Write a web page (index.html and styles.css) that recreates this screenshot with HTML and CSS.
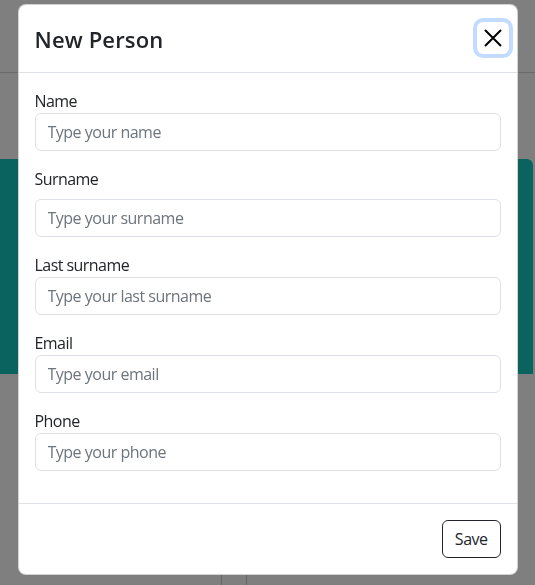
FILE: index.html
```html
<!DOCTYPE html>
<html lang="en">
<head>
<meta charset="utf-8">
<title>New Person</title>
<link rel="stylesheet" href="styles.css">
</head>
<body>
<div class="page">
  <div class="topbar"></div>
  <div class="hero"></div>
  <div class="columns">
    <div class="col col-a"></div>
    <div class="col col-b"></div>
    <div class="col col-c"></div>
  </div>
</div>
<div class="backdrop"></div>
<div class="modal">
  <div class="dialog">
    <div class="modal-header">
      <h4 class="modal-title">New Person</h4>
      <button class="btn-close" type="button" aria-label="Close">
        <svg width="18" height="18" viewBox="0 0 18 18"><path d="M1 1L17 17M17 1L1 17" stroke="#000" stroke-width="2" fill="none"/></svg>
      </button>
    </div>
    <form class="modal-body">
      <div class="field">
        <label class="label" for="name">Name</label>
        <input class="input" id="name" type="text" placeholder="Type your name">
      </div>
      <div class="field">
        <label class="label label-spaced" for="surname">Surname</label>
        <input class="input" id="surname" type="text" placeholder="Type your surname">
      </div>
      <div class="field">
        <label class="label" for="last">Last surname</label>
        <input class="input" id="last" type="text" placeholder="Type your last surname">
      </div>
      <div class="field">
        <label class="label" for="email">Email</label>
        <input class="input" id="email" type="email" placeholder="Type your email">
      </div>
      <div class="field">
        <label class="label" for="phone">Phone</label>
        <input class="input" id="phone" type="tel" placeholder="Type your phone">
      </div>
    </form>
    <div class="modal-footer">
      <button class="btn-save" type="button">Save</button>
    </div>
  </div>
</div>
</body>
</html>
```
FILE: styles.css
```css
* { box-sizing: border-box; }
html, body { margin: 0; padding: 0; }
body {
  width: 535px;
  height: 585px;
  overflow: hidden;
  background: #ffffff;
  font-family: "Open Sans", "Noto Sans", sans-serif;
  color: #212529;
}
.page {
  display: flex;
  flex-direction: column;
  height: 585px;
}
.topbar {
  height: 73px;
  border-bottom: 1px solid #d6d6d6;
  flex: none;
}
.hero {
  margin-top: 86px;
  height: 215px;
  width: 533px;
  background: #16c6c1;
  border-radius: 0 6px 0 0;
  flex: none;
}
.columns {
  margin-top: 200px;
  flex: 1;
  display: flex;
}
.col-a { width: 222px; border-right: 1px solid #cccccc; }
.col-b { width: 25px; border-right: 1px solid #cccccc; }
.col-c { flex: 1; }
.backdrop {
  position: fixed;
  inset: 0;
  background: rgba(0, 0, 0, 0.5);
}
.modal {
  position: fixed;
  inset: 0;
  display: flex;
  justify-content: center;
  align-items: flex-start;
}
.dialog {
  width: 500px;
  margin-top: 3.5px;
  background: #fff;
  border: 1px solid rgba(0, 0, 0, 0.175);
  border-radius: 8px;
  display: flex;
  flex-direction: column;
}
.modal-header {
  display: flex;
  align-items: center;
  padding: 16px;
  border-bottom: 1px solid #dee2e6;
}
.modal-title {
  margin: 0;
  padding-top: 2px;
  font-size: 22px;
  font-weight: 600;
  line-height: 33px;
  letter-spacing: 0.15px;
  color: #212529;
}
.btn-close {
  width: 32px;
  height: 32px;
  margin: -8px -8px -8px auto;
  padding: 0;
  border: 0;
  border-radius: 6px;
  background: transparent;
  display: flex;
  align-items: center;
  justify-content: center;
  box-shadow: 0 0 0 4px rgba(13, 110, 253, 0.25);
}
.modal-body {
  padding: 16px;
  display: flex;
  flex-direction: column;
  margin: 0;
}
.field {
  display: flex;
  flex-direction: column;
  margin-bottom: 16px;
}
.label {
  font-size: 16px;
  line-height: 24px;
  letter-spacing: -0.55px;
}
.label-spaced { margin-bottom: 8px; }
.input {
  height: 38px;
  padding: 6px 12px;
  font-family: inherit;
  font-size: 16px;
  line-height: 24px;
  letter-spacing: -0.5px;
  color: #212529;
  border: 1px solid #dee2e6;
  border-radius: 6px;
  background: #fff;
}
.input::placeholder { color: #6c757d; opacity: 1; }
.modal-footer {
  display: flex;
  justify-content: flex-end;
  padding: 12px;
  border-top: 1px solid #dee2e6;
}
.btn-save {
  margin: 4px;
  height: 38px;
  padding: 6px 12px;
  font-family: inherit;
  font-size: 16px;
  line-height: 24px;
  letter-spacing: -0.5px;
  color: #212529;
  background: #fff;
  border: 1px solid #212529;
  border-radius: 6px;
}
```
